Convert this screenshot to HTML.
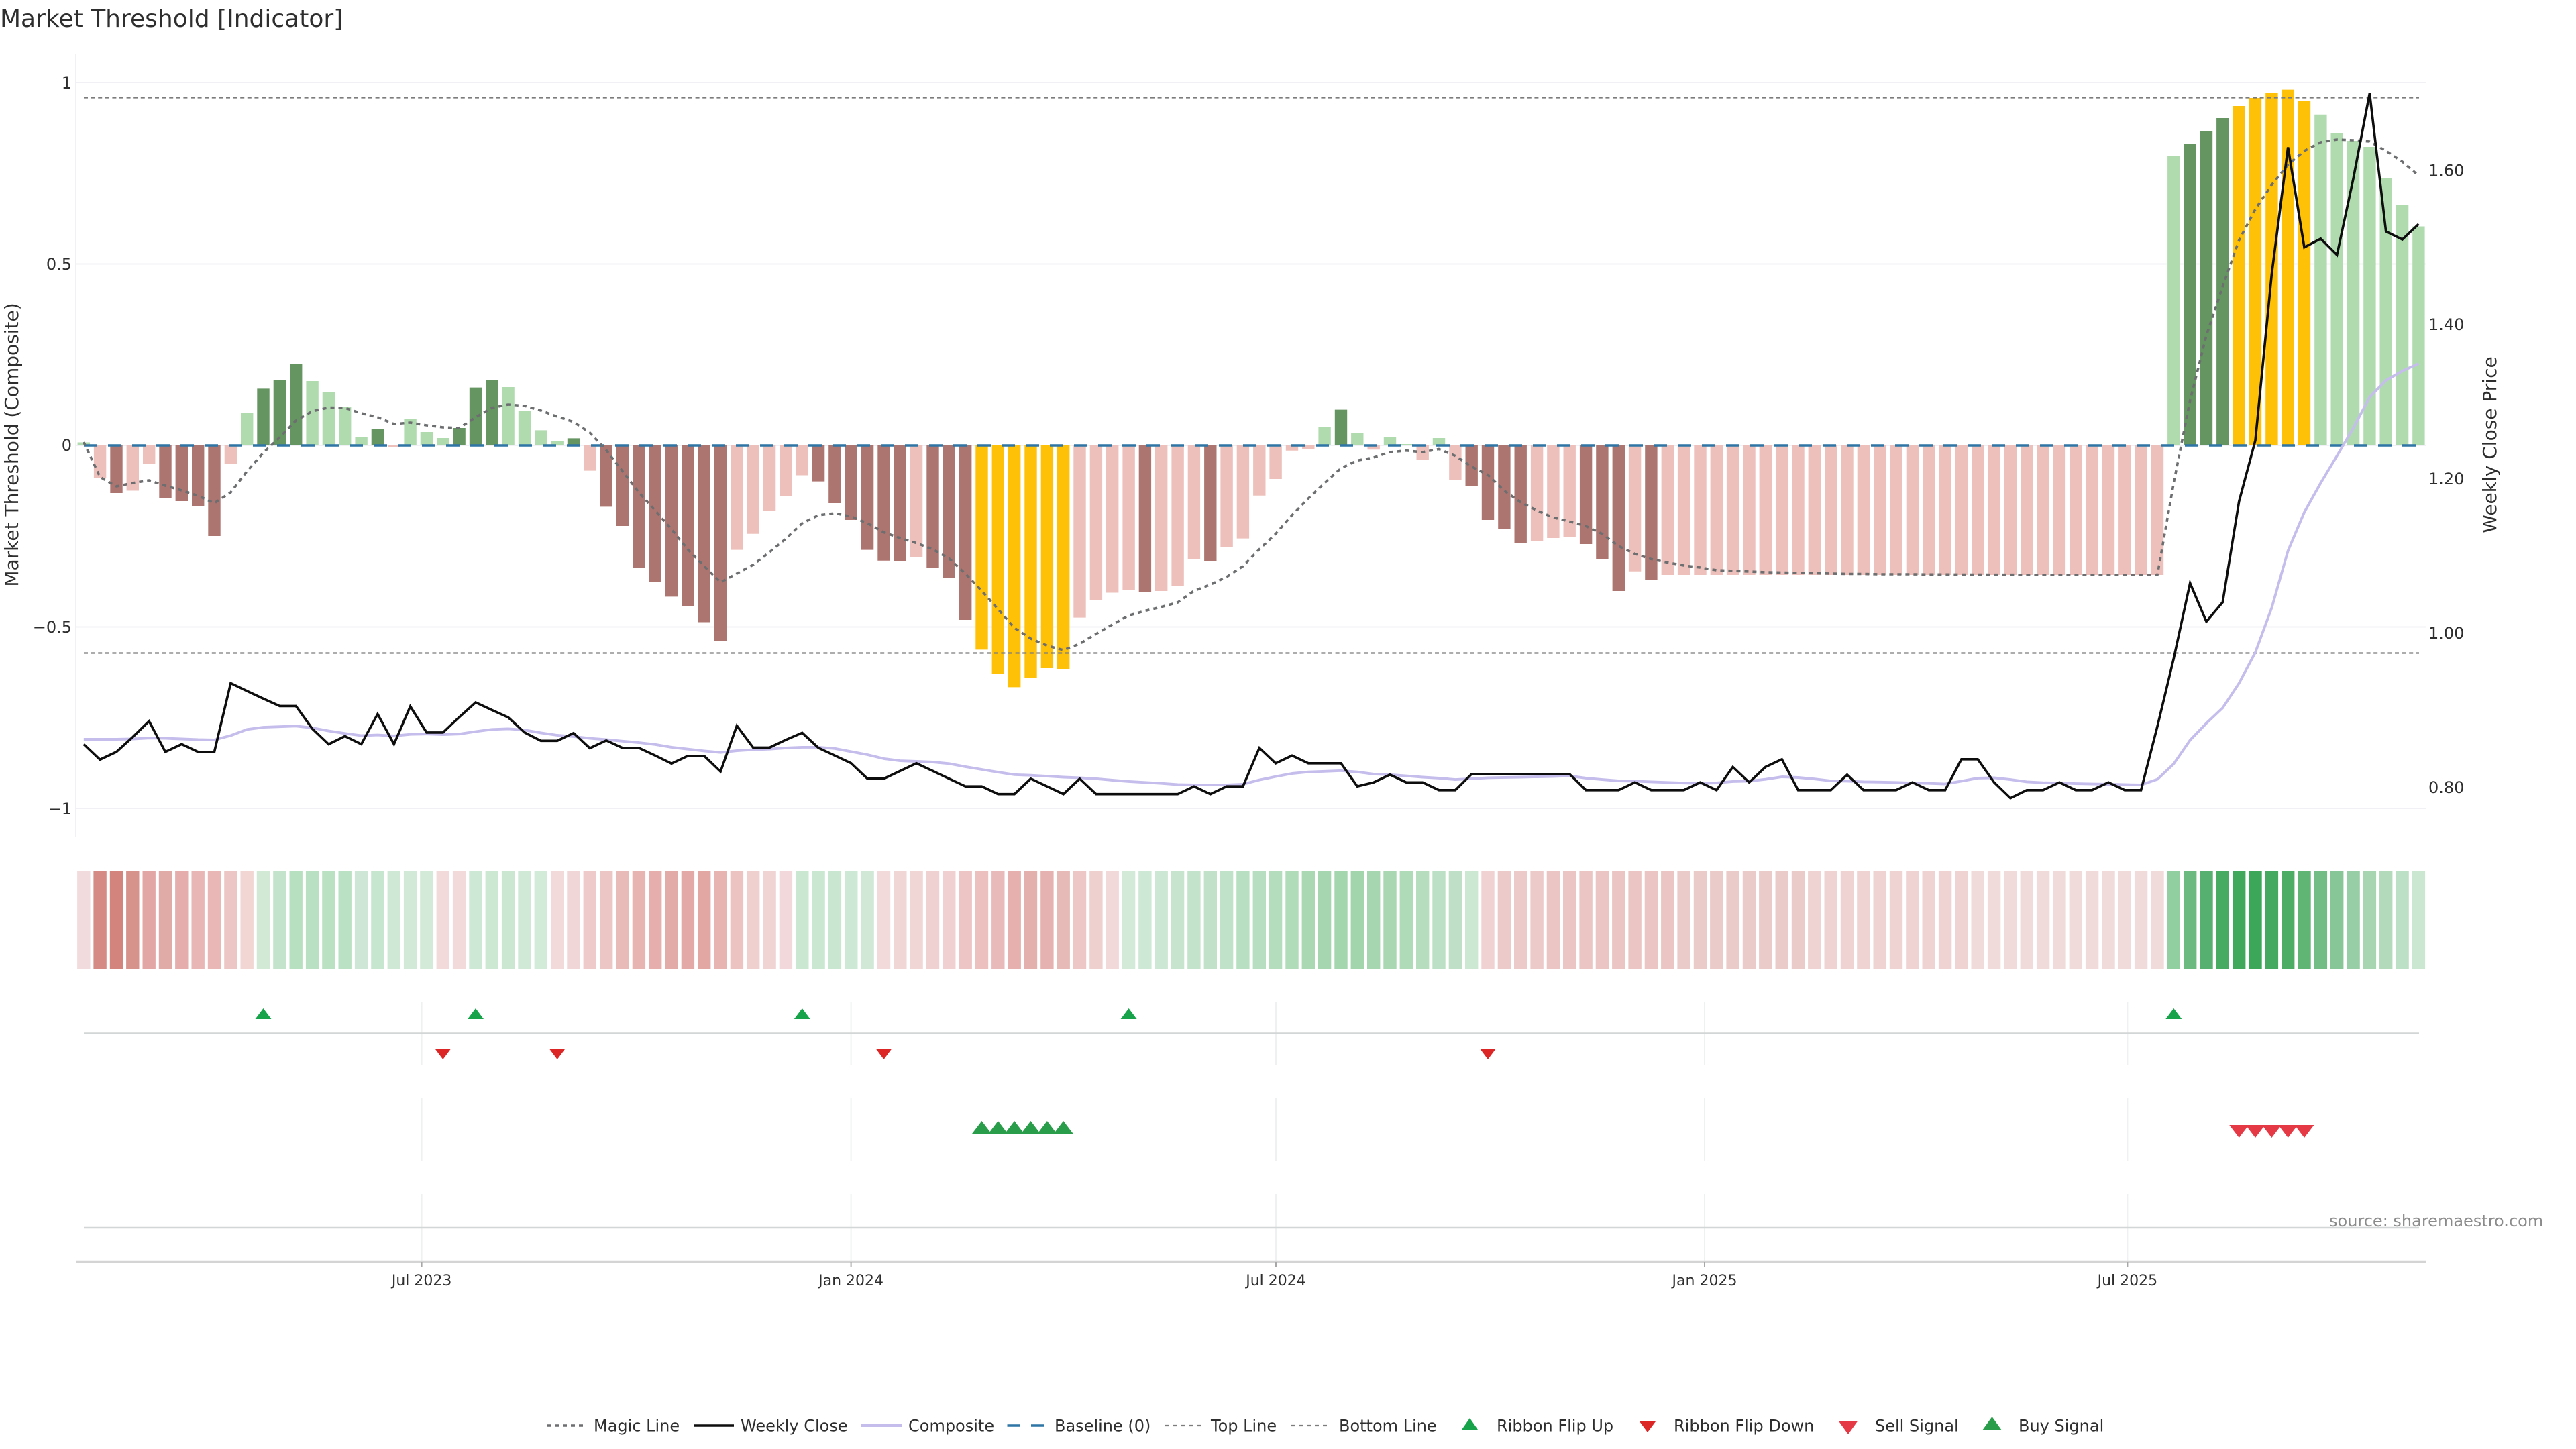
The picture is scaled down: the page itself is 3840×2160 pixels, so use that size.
<!DOCTYPE html>
<html lang="en"><head><meta charset="utf-8"><title>Market Threshold [Indicator]</title>
<style>html,body{margin:0;padding:0;background:#fff}svg{display:block}text{font-family:"DejaVu Sans","Liberation Sans",sans-serif;fill:#2e2e2e}</style></head>
<body>
<svg width="3840" height="2160" viewBox="0 0 3840 2160" xmlns="http://www.w3.org/2000/svg">
<rect width="3840" height="2160" fill="#fff"/>
<text x="0" y="40" font-size="36">Market Threshold [Indicator]</text>
<!-- grid -->
<g stroke="#f1f1f5" stroke-width="2" fill="none">
<path d="M113 80V1248"/>
<path d="M113 123H3616M113 393.5H3616M113 664H3616M113 934.5H3616M113 1205H3616"/>
</g>
<!-- histogram bars -->
<g fill="none" stroke-width="18.4">
<path stroke="#edc0bb" d="M149.1 664V712.5M197.8 664V731.5M222.2 664V692M343.9 664V691M587.3 664V666.7M879.3 664V701.6M1098.4 664V819.6M1122.7 664V795.8M1147.1 664V762M1171.4 664V740M1195.8 664V708.5M1366.1 664V831M1609.5 664V920.6M1633.9 664V894.5M1658.2 664V883.5M1682.6 664V879.8M1731.2 664V881M1755.6 664V873M1779.9 664V833M1828.6 664V815M1852.9 664V802.6M1877.3 664V738.8M1901.6 664V714M1926 664V671.7M1950.3 664V669.4M2047.7 664V670.3M2120.7 664V685M2169.4 664V716M2291.1 664V806M2315.4 664V802M2339.7 664V801M2437.1 664V851.8M2485.8 664V857M2510.1 664V857M2534.5 664V857M2558.8 664V857M2583.1 664V857M2607.5 664V857M2631.8 664V857M2656.2 664V857M2680.5 664V857M2704.8 664V857M2729.2 664V857M2753.5 664V857M2777.9 664V857M2802.2 664V857M2826.5 664V857M2850.9 664V857M2875.2 664V857M2899.6 664V857M2923.9 664V857M2948.2 664V857M2972.6 664V857M2996.9 664V857M3021.3 664V857M3045.6 664V857M3069.9 664V857M3094.3 664V857M3118.6 664V857M3143 664V857M3167.3 664V857M3191.6 664V857M3216 664V857"/>
<path stroke="#ad7570" d="M173.5 664V735M246.5 664V743M270.8 664V747M295.2 664V754.5M319.5 664V799M903.7 664V755.4M928 664V784M952.4 664V847M976.7 664V867.4M1001 664V889.4M1025.4 664V903.7M1049.7 664V927.5M1074.1 664V955.5M1220.1 664V717.6M1244.4 664V750M1268.8 664V775M1293.1 664V819.6M1317.5 664V835.7M1341.8 664V836.6M1390.5 664V847M1414.8 664V861M1439.2 664V924M1706.9 664V882M1804.3 664V836.6M2193.7 664V725M2218 664V775M2242.4 664V789M2266.7 664V809.5M2364.1 664V811M2388.4 664V833.4M2412.8 664V881M2461.4 664V864"/>
<path stroke="#ffc107" d="M1463.5 664V968.4M1487.8 664V1004M1512.2 664V1024.4M1536.5 664V1011M1560.9 664V996M1585.2 664V997.8M3337.7 664V158M3362 664V146M3386.4 664V138.7M3410.7 664V133.6M3435 664V150.6"/>
<path stroke="#659560" d="M392.5 664V579.4M416.9 664V567M441.2 664V542M562.9 664V639.6M684.6 664V638M709 664V577.6M733.3 664V566.6M855 664V653.4M1999 664V610.6M3264.7 664V215M3289 664V196M3313.3 664V176"/>
<path stroke="#b0dbaf" d="M124.8 664V659.5M368.2 664V616M465.6 664V568M489.9 664V585M514.2 664V606M538.6 664V652M611.6 664V625M635.9 664V644M660.3 664V653M757.6 664V577M782 664V612M806.3 664V641.4M830.7 664V657M1974.6 664V636M2023.3 664V646M2072 664V651M2096.3 664V662M2145 664V653M3240.3 664V232M3459.4 664V170.8M3483.7 664V198M3508.1 664V210M3532.4 664V219M3556.7 664V265M3581.1 664V305M3605.4 664V337.5"/>
</g>
<!-- reference lines -->
<g fill="none">
<path d="M125 664H3606" stroke="#2f75a5" stroke-width="3.4" stroke-dasharray="20 16"/>
<path d="M125 145.5H3606M125 973.5H3606" stroke="#7c7c7c" stroke-width="2.2" stroke-dasharray="6 4.6"/>
</g>
<!-- magic line -->
<polyline fill="none" stroke="#6c6e70" stroke-width="3.6" stroke-dasharray="6 6" stroke-linejoin="round" points="124.8,659 149.1,711 173.5,725 197.8,720 222.2,716 246.5,724 270.8,731 295.2,739 319.5,750 343.9,734 368.2,702.5 392.5,675 416.9,652 441.2,627 465.6,613 489.9,607.5 514.2,608 538.6,616 562.9,622 587.3,632 611.6,630 635.9,634 660.3,637 684.6,638 709,622 733.3,608 757.6,603 782,605 806.3,612 830.7,621 855,629 879.3,645 903.7,671 928,702.5 952.4,734 976.7,761 1001,789 1025.4,819 1049.7,844 1074.1,868 1098.4,855 1122.7,842 1147.1,823 1171.4,803 1195.8,780 1220.1,768 1244.4,765 1268.8,770 1293.1,780 1317.5,793.5 1341.8,802 1366.1,809.5 1390.5,818.7 1414.8,832.5 1439.2,855.4 1463.5,880.7 1487.8,908 1512.2,936 1536.5,952 1560.9,962.4 1585.2,969 1609.5,959.7 1633.9,945 1658.2,931 1682.6,917.4 1706.9,910.5 1731.2,904.6 1755.6,898 1779.9,880.7 1804.3,871.5 1828.6,860 1852.9,844 1877.3,818.7 1901.6,795.8 1926,768 1950.3,743 1974.6,720 1999,698 2023.3,686.4 2047.7,682 2072,674 2096.3,671.7 2120.7,674 2145,669.4 2169.4,679.5 2193.7,695.6 2218,708 2242.4,731.5 2266.7,748.5 2291.1,761 2315.4,771.4 2339.7,777.4 2364.1,784.3 2388.4,795.8 2412.8,814 2437.1,825.6 2461.4,833.4 2485.8,838.5 2510.1,843 2534.5,846 2558.8,850 2583.1,851 2607.5,852 2631.8,853 2656.2,853.5 2680.5,854 2704.8,854.5 2729.2,855 2753.5,855.5 2777.9,855.5 2802.2,856 2826.5,856 2850.9,856 2875.2,856.3 2899.6,856.3 2923.9,856.5 2948.2,856.5 2972.6,856.7 2996.9,856.7 3021.3,856.8 3045.6,857 3069.9,857 3094.3,857 3118.6,857 3143,857 3167.3,857 3191.6,857 3216,857 3240.3,720 3264.7,597 3289,500 3313.3,427 3337.7,358 3362,312 3386.4,275.5 3410.7,245.6 3435,225 3459.4,212 3483.7,208 3508.1,209 3532.4,211 3556.7,225 3581.1,241 3605.4,261.7"/>
<!-- composite -->
<polyline fill="none" stroke="#c5bdeb" stroke-width="3.9" stroke-linejoin="round" points="124.8,1102 149.1,1102 173.5,1102 197.8,1101.5 222.2,1100.2 246.5,1100.6 270.8,1101.5 295.2,1102.5 319.5,1102.9 343.9,1096.5 368.2,1087.3 392.5,1084.1 416.9,1083.2 441.2,1082.3 465.6,1085 489.9,1089.6 514.2,1093.3 538.6,1096.5 562.9,1095.6 587.3,1097 611.6,1094.7 635.9,1094.2 660.3,1095.1 684.6,1094.2 709,1090.5 733.3,1087.3 757.6,1086.4 782,1088.2 806.3,1092.4 830.7,1096 855,1097.9 879.3,1100.6 903.7,1102.5 928,1104.8 952.4,1107 976.7,1109.8 1001,1113.9 1025.4,1116.7 1049.7,1119.4 1074.1,1121.7 1098.4,1119 1122.7,1117.6 1147.1,1116.7 1171.4,1114.9 1195.8,1113.9 1220.1,1113.9 1244.4,1115.8 1268.8,1120.4 1293.1,1125 1317.5,1130.9 1341.8,1134.1 1366.1,1135 1390.5,1136 1414.8,1138.3 1439.2,1142.9 1463.5,1147 1487.8,1151.1 1512.2,1154.8 1536.5,1155.7 1560.9,1157.1 1585.2,1158.5 1609.5,1159.4 1633.9,1160.8 1658.2,1163 1682.6,1164.9 1706.9,1166.3 1731.2,1167.7 1755.6,1169.5 1779.9,1170 1804.3,1170 1828.6,1170 1852.9,1169 1877.3,1162.6 1901.6,1157.6 1926,1153 1950.3,1150.7 1974.6,1149.8 1999,1148.8 2023.3,1150.7 2047.7,1153.9 2072,1154.8 2096.3,1156.6 2120.7,1158.5 2145,1159.9 2169.4,1162.1 2193.7,1160.8 2218,1159.4 2242.4,1158.9 2266.7,1158.5 2291.1,1158 2315.4,1157.6 2339.7,1156.6 2364.1,1159.9 2388.4,1162.1 2412.8,1164 2437.1,1164.4 2461.4,1165.4 2485.8,1166.3 2510.1,1167.2 2534.5,1167.7 2558.8,1167 2583.1,1164.9 2607.5,1164.4 2631.8,1161.7 2656.2,1158 2680.5,1159 2704.8,1161.2 2729.2,1164 2753.5,1164.4 2777.9,1165.4 2802.2,1165.8 2826.5,1166.3 2850.9,1167.2 2875.2,1167.7 2899.6,1168.6 2923.9,1164.4 2948.2,1159.9 2972.6,1159.4 2996.9,1162.1 3021.3,1165.4 3045.6,1166.7 3069.9,1167.2 3094.3,1168.1 3118.6,1168.6 3143,1169 3167.3,1169.5 3191.6,1170 3216,1161.7 3240.3,1138.7 3264.7,1103.4 3289,1078.1 3313.3,1055.2 3337.7,1018.4 3362,972.5 3386.4,906 3410.7,821 3435,763.6 3459.4,720 3483.7,679.5 3508.1,638 3532.4,592 3556.7,567 3581.1,553 3605.4,542"/>
<!-- weekly close -->
<polyline fill="none" stroke="#0d0d0d" stroke-width="3.6" stroke-linejoin="miter" points="124.8,1109.4 149.1,1132.3 173.5,1120.8 197.8,1098.8 222.2,1075 246.5,1120.8 270.8,1109.4 295.2,1120.8 319.5,1120.8 343.9,1018.4 368.2,1030 392.5,1041.4 416.9,1052.4 441.2,1052.4 465.6,1086.4 489.9,1109.4 514.2,1097.4 538.6,1109.4 562.9,1064.4 587.3,1109.4 611.6,1052.9 635.9,1091.9 660.3,1091.9 684.6,1069 709,1047 733.3,1058.4 757.6,1069.4 782,1091.9 806.3,1104.3 830.7,1104.3 855,1092.8 879.3,1115.3 903.7,1103.8 928,1114.9 952.4,1114.9 976.7,1126.3 1001,1138.3 1025.4,1126.8 1049.7,1126.8 1074.1,1150.2 1098.4,1081.8 1122.7,1114.4 1147.1,1114.4 1171.4,1102.9 1195.8,1092.4 1220.1,1114.9 1244.4,1126.3 1268.8,1137.8 1293.1,1160.8 1317.5,1160.8 1341.8,1149.3 1366.1,1137.8 1390.5,1149.3 1414.8,1160.8 1439.2,1172.2 1463.5,1172.2 1487.8,1183.7 1512.2,1183.7 1536.5,1160.8 1560.9,1172.2 1585.2,1183.7 1609.5,1160.8 1633.9,1183.7 1658.2,1183.7 1682.6,1183.7 1706.9,1183.7 1731.2,1183.7 1755.6,1183.7 1779.9,1172.2 1804.3,1183.7 1828.6,1172.2 1852.9,1172.2 1877.3,1114.9 1901.6,1137.8 1926,1126.3 1950.3,1137.8 1974.6,1137.8 1999,1137.8 2023.3,1172.2 2047.7,1166.3 2072,1154.8 2096.3,1166.3 2120.7,1166.3 2145,1177.8 2169.4,1177.8 2193.7,1153.9 2218,1153.9 2242.4,1153.9 2266.7,1153.9 2291.1,1153.9 2315.4,1153.9 2339.7,1153.9 2364.1,1177.8 2388.4,1177.8 2412.8,1177.8 2437.1,1166.3 2461.4,1177.8 2485.8,1177.8 2510.1,1177.8 2534.5,1166.3 2558.8,1177.8 2583.1,1143.3 2607.5,1166.3 2631.8,1143.3 2656.2,1131.8 2680.5,1177.8 2704.8,1177.8 2729.2,1177.8 2753.5,1154.8 2777.9,1177.8 2802.2,1177.8 2826.5,1177.8 2850.9,1166.3 2875.2,1177.8 2899.6,1177.8 2923.9,1131.8 2948.2,1131.8 2972.6,1166.3 2996.9,1189.7 3021.3,1177.8 3045.6,1177.8 3069.9,1166.3 3094.3,1177.8 3118.6,1177.8 3143,1166.3 3167.3,1177.8 3191.6,1177.8 3216,1082.7 3240.3,981.7 3264.7,869.2 3289,926.6 3313.3,897.7 3337.7,747.5 3362,656.6 3386.4,408.6 3410.7,219.5 3435,368.7 3459.4,355.8 3483.7,380 3508.1,266 3532.4,139 3556.7,345 3581.1,357 3605.4,334"/>
<!-- axis labels -->
<g font-size="24" text-anchor="end">
<text x="107" y="132">1</text><text x="107" y="402">0.5</text><text x="107" y="672">0</text><text x="107" y="943">−0.5</text><text x="107" y="1214">−1</text>
</g>
<g font-size="24">
<text x="3620" y="262.5">1.60</text><text x="3620" y="492">1.40</text><text x="3620" y="722">1.20</text><text x="3620" y="952">1.00</text><text x="3620" y="1182">0.80</text>
</g>
<text font-size="28" text-anchor="middle" transform="translate(27 663) rotate(-90)">Market Threshold (Composite)</text>
<text font-size="28" text-anchor="middle" transform="translate(3721 663) rotate(-90)">Weekly Close Price</text>
<!-- ribbon -->
<g fill="none" stroke-width="19.4">
<path stroke="#f2dbdc" d="M124.8 1299V1444"/><path stroke="#d58a83" d="M149.1 1299V1444"/><path stroke="#d3857d" d="M173.5 1299V1444"/><path stroke="#d6938c" d="M197.8 1299V1444"/><path stroke="#e2a7a5" d="M222.2 1299V1444"/><path stroke="#e0aaa7" d="M246.5 1299V1444"/><path stroke="#e5aeac" d="M270.8 1299V1444"/><path stroke="#e7b6b5" d="M295.2 1299V1444"/><path stroke="#e8b7b6" d="M319.5 1299V1444"/><path stroke="#ecc6c4" d="M343.9 1299V1444"/><path stroke="#f1d6d4" d="M368.2 1299V1444"/>
<path stroke="#d2e9d6" d="M392.5 1299V1444"/><path stroke="#c4e3cc" d="M416.9 1299V1444"/><path stroke="#b7e0c0" d="M441.2 1299V1444"/><path stroke="#b9e0c2" d="M465.6 1299V1444"/><path stroke="#bbe1c3" d="M489.9 1299V1444"/><path stroke="#bae1c3" d="M514.2 1299V1444"/><path stroke="#cde6d5" d="M538.6 1299V1444"/><path stroke="#c7e6d0" d="M562.9 1299V1444"/><path stroke="#cfe8d6" d="M587.3 1299V1444"/><path stroke="#d2e9d8" d="M611.6 1299V1444"/><path stroke="#d3ead9" d="M635.9 1299V1444"/>
<path stroke="#f2d9da" d="M660.3 1299V1444M684.6 1299V1444"/>
<path stroke="#cde8d4" d="M709 1299V1444"/><path stroke="#cce8d3" d="M733.3 1299V1444"/><path stroke="#cbe7d2" d="M757.6 1299V1444"/><path stroke="#d0e9d6" d="M782 1299V1444"/><path stroke="#d2ead8" d="M806.3 1299V1444"/>
<path stroke="#f2dada" d="M830.7 1299V1444"/><path stroke="#f0d6d6" d="M855 1299V1444"/><path stroke="#eecbca" d="M879.3 1299V1444"/><path stroke="#ecc6c4" d="M903.7 1299V1444"/><path stroke="#e9bbb8" d="M928 1299V1444"/><path stroke="#e7b4b2" d="M952.4 1299V1444"/><path stroke="#e6afad" d="M976.7 1299V1444"/><path stroke="#e3aba8" d="M1001 1299V1444"/><path stroke="#e3a9a6" d="M1025.4 1299V1444"/><path stroke="#e2a6a3" d="M1049.7 1299V1444"/><path stroke="#e7b4b1" d="M1074.1 1299V1444"/><path stroke="#ecc3c1" d="M1098.4 1299V1444"/><path stroke="#f0d0cf" d="M1122.7 1299V1444"/><path stroke="#f0d4d4" d="M1147.1 1299V1444"/><path stroke="#f2d8da" d="M1171.4 1299V1444"/>
<path stroke="#c9e7d1" d="M1195.8 1299V1444"/><path stroke="#cae7d2" d="M1220.1 1299V1444"/><path stroke="#c8e6d0" d="M1244.4 1299V1444"/><path stroke="#cde8d4" d="M1268.8 1299V1444"/><path stroke="#d1e8d7" d="M1293.1 1299V1444"/>
<path stroke="#f2d9da" d="M1317.5 1299V1444"/><path stroke="#f1d6d6" d="M1341.8 1299V1444M1366.1 1299V1444"/><path stroke="#efd1d1" d="M1390.5 1299V1444"/><path stroke="#f0d0d0" d="M1414.8 1299V1444"/><path stroke="#edc5c5" d="M1439.2 1299V1444"/><path stroke="#ebc0bf" d="M1463.5 1299V1444"/><path stroke="#e9baba" d="M1487.8 1299V1444"/><path stroke="#e6b0af" d="M1512.2 1299V1444"/><path stroke="#e4b0ae" d="M1536.5 1299V1444"/><path stroke="#e5b2b1" d="M1560.9 1299V1444"/><path stroke="#e5bab7" d="M1585.2 1299V1444"/><path stroke="#ecc7c5" d="M1609.5 1299V1444"/><path stroke="#eed0cf" d="M1633.9 1299V1444"/><path stroke="#f2d9d9" d="M1658.2 1299V1444"/>
<path stroke="#d4ead9" d="M1682.6 1299V1444"/><path stroke="#cde8d4" d="M1706.9 1299V1444"/><path stroke="#cce7d3" d="M1731.2 1299V1444"/><path stroke="#c7e4cf" d="M1755.6 1299V1444"/><path stroke="#c3e3cb" d="M1779.9 1299V1444"/><path stroke="#c1e2c9" d="M1804.3 1299V1444"/><path stroke="#bfe2c8" d="M1828.6 1299V1444"/><path stroke="#b8dfc1" d="M1852.9 1299V1444"/><path stroke="#b7dec0" d="M1877.3 1299V1444"/><path stroke="#b4ddbe" d="M1901.6 1299V1444"/><path stroke="#b0dcba" d="M1926 1299V1444"/><path stroke="#a9d8b3" d="M1950.3 1299V1444"/><path stroke="#a6d6b0" d="M1974.6 1299V1444"/><path stroke="#a4d6ae" d="M1999 1299V1444"/><path stroke="#a3d5ad" d="M2023.3 1299V1444"/><path stroke="#a6d6af" d="M2047.7 1299V1444"/><path stroke="#a9d7b2" d="M2072 1299V1444"/><path stroke="#b0dbb9" d="M2096.3 1299V1444"/><path stroke="#b6ddbe" d="M2120.7 1299V1444"/><path stroke="#bce0c5" d="M2145 1299V1444"/><path stroke="#bfe0c7" d="M2169.4 1299V1444"/><path stroke="#cce8d3" d="M2193.7 1299V1444"/>
<path stroke="#f0d2d2" d="M2218 1299V1444"/><path stroke="#eccac9" d="M2242.4 1299V1444M2266.7 1299V1444M2291.1 1299V1444"/><path stroke="#eac5c3" d="M2315.4 1299V1444M2339.7 1299V1444M2364.1 1299V1444M2388.4 1299V1444M2412.8 1299V1444M2437.1 1299V1444M2461.4 1299V1444M2485.8 1299V1444"/>
<path stroke="#ebcbc9" d="M2510.1 1299V1444M2534.5 1299V1444M2558.8 1299V1444M2583.1 1299V1444M2607.5 1299V1444M2631.8 1299V1444M2656.2 1299V1444M2680.5 1299V1444"/>
<path stroke="#eed3d2" d="M2704.8 1299V1444M2729.2 1299V1444M2753.5 1299V1444M2777.9 1299V1444M2802.2 1299V1444M2826.5 1299V1444M2850.9 1299V1444M2875.2 1299V1444M2899.6 1299V1444M2923.9 1299V1444"/>
<path stroke="#f1dbda" d="M2948.2 1299V1444M2972.6 1299V1444M2996.9 1299V1444M3021.3 1299V1444M3045.6 1299V1444M3069.9 1299V1444M3094.3 1299V1444M3118.6 1299V1444M3143 1299V1444M3167.3 1299V1444M3191.6 1299V1444M3216 1299V1444"/>
<path stroke="#92cfa0" d="M3240.3 1299V1444"/><path stroke="#6bbb80" d="M3264.7 1299V1444"/><path stroke="#56b06f" d="M3289 1299V1444"/><path stroke="#48ab62" d="M3313.3 1299V1444"/><path stroke="#3fa85a" d="M3337.7 1299V1444"/><path stroke="#3da759" d="M3362 1299V1444"/><path stroke="#45aa5f" d="M3386.4 1299V1444"/><path stroke="#4ead65" d="M3410.7 1299V1444"/><path stroke="#60b575" d="M3435 1299V1444"/><path stroke="#72bd85" d="M3459.4 1299V1444"/><path stroke="#87c697" d="M3483.7 1299V1444"/><path stroke="#98cea5" d="M3508.1 1299V1444"/><path stroke="#a7d5b2" d="M3532.4 1299V1444"/><path stroke="#b2dabb" d="M3556.7 1299V1444"/><path stroke="#bce0c5" d="M3581.1 1299V1444"/><path stroke="#cbe7d2" d="M3605.4 1299V1444"/>
</g>
<!-- lower panels -->
<g stroke="#eef0f1" stroke-width="2" fill="none">
<path d="M628.6 1494V1587M628.6 1637V1730M628.6 1780V1881M1268.6 1494V1587M1268.6 1637V1730M1268.6 1780V1881M1902 1494V1587M1902 1637V1730M1902 1780V1881M2541 1494V1587M2541 1637V1730M2541 1780V1881M3171.4 1494V1587M3171.4 1637V1730M3171.4 1780V1881"/>
</g>
<path d="M125 1540.5H3606M125 1830H3606" stroke="#d3d6d6" stroke-width="2.4" fill="none"/>
<path d="M113.5 1881H3616" stroke="#d4d4d4" stroke-width="2.4" fill="none"/>
<path d="M628.6 1881V1889M1268.6 1881V1889M1902 1881V1889M2541 1881V1889M3171.4 1881V1889" stroke="#a8a8a8" stroke-width="2" fill="none"/>
<g font-size="22" text-anchor="middle">
<text x="628.6" y="1916">Jul 2023</text><text x="1268.6" y="1916">Jan 2024</text><text x="1902" y="1916">Jul 2024</text><text x="2541" y="1916">Jan 2025</text><text x="3171.4" y="1916">Jul 2025</text>
</g>
<!-- flips -->
<path fill="#16a34a" d="M380.5 1519L392.5 1503L404.5 1519ZM697 1519L709 1503L721 1519ZM1183.8 1519L1195.8 1503L1207.8 1519ZM1670.6 1519L1682.6 1503L1694.6 1519ZM3228.3 1519L3240.3 1503L3252.3 1519Z"/>
<path fill="#dc2626" d="M648.3 1563L672.3 1563L660.3 1579ZM818.7 1563L842.7 1563L830.7 1579ZM1305.5 1563L1329.5 1563L1317.5 1579ZM2206 1563L2230 1563L2218 1579Z"/>
<path fill="#2a9d4a" d="M1449 1690L1463.5 1671L1478 1690ZM1473.3 1690L1487.8 1671L1502.3 1690ZM1497.7 1690L1512.2 1671L1526.7 1690ZM1522 1690L1536.5 1671L1551 1690ZM1546.4 1690L1560.9 1671L1575.4 1690ZM1570.7 1690L1585.2 1671L1599.7 1690Z"/>
<path fill="#e63946" d="M3323.2 1677L3352.2 1677L3337.7 1696ZM3347.5 1677L3376.5 1677L3362 1696ZM3371.9 1677L3400.9 1677L3386.4 1696ZM3396.2 1677L3425.2 1677L3410.7 1696ZM3420.5 1677L3449.5 1677L3435 1696Z"/>
<text x="3472" y="1828" font-size="24" style="fill:#8b8b8b">source: sharemaestro.com</text>
<!-- legend -->
<g fill="none">
<path d="M815 2125H870" stroke="#6c6e70" stroke-width="3.6" stroke-dasharray="6 6"/>
<path d="M1034 2125H1094" stroke="#0d0d0d" stroke-width="3.6"/>
<path d="M1284 2125H1344" stroke="#c5bdeb" stroke-width="3.9"/>
<path d="M1501.5 2125H1520M1537 2125H1556" stroke="#2f75a5" stroke-width="3.4"/>
<path d="M1736 2125H1790M1924 2125H1978" stroke="#7c7c7c" stroke-width="2.2" stroke-dasharray="6 6"/>
</g>
<path fill="#16a34a" d="M2179 2131L2191 2114L2203 2131Z"/>
<path fill="#dc2626" d="M2444 2119L2468 2119L2456 2135Z"/>
<path fill="#e63946" d="M2740.5 2118L2769.5 2118L2755 2138Z"/>
<path fill="#2a9d4a" d="M2955 2132L2969.5 2112L2984 2132Z"/>
<g font-size="24">
<text x="885" y="2133.5">Magic Line</text><text x="1104" y="2133.5">Weekly Close</text><text x="1354" y="2133.5">Composite</text><text x="1572" y="2133.5">Baseline (0)</text><text x="1805" y="2133.5">Top Line</text><text x="1996" y="2133.5">Bottom Line</text><text x="2231" y="2133.5">Ribbon Flip Up</text><text x="2495" y="2133.5">Ribbon Flip Down</text><text x="2795" y="2133.5">Sell Signal</text><text x="3009" y="2133.5">Buy Signal</text>
</g>
</svg>
</body></html>
